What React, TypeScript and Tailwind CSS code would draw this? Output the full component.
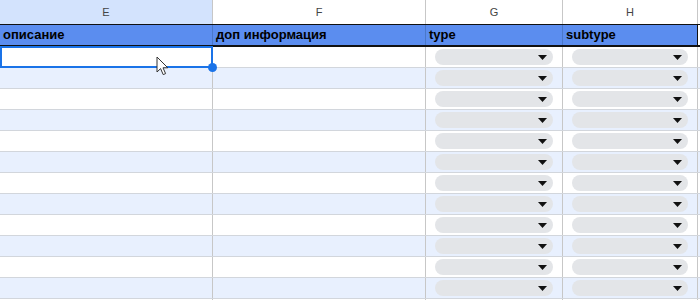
import React from 'react';

const font = { fontFamily: '"Liberation Sans", Arial, sans-serif' };

const ROWS = 13;

function Chip() {
  return (
    <div className="mx-[9px] flex h-4 flex-1 items-center justify-end rounded-full bg-[#e3e5e8] pr-[6px]">
      <svg width="9" height="5" viewBox="0 0 9 5">
        <path d="M0 0 L9 0 L4.5 5 Z" fill="#111" />
      </svg>
    </div>
  );
}

function Cursor() {
  return (
    <svg width="14" height="20" viewBox="0 0 14 20" className="absolute left-[156px] top-[9px]">
      <path
        d="M1 1 L1 16 L4.6 12.6 L7.2 18.6 L9.6 17.6 L7 11.8 L11.8 11.8 Z"
        fill="#fff"
        stroke="#333"
        strokeWidth="1"
        strokeLinejoin="round"
      />
    </svg>
  );
}

export default function App() {
  return (
    <div className="h-[300px] w-[700px] overflow-hidden bg-white" style={font}>
      {/* Column letters */}
      <div className="flex h-[24px] text-[11px] text-[#444]">
        <div className="flex w-[213px] items-center justify-center border-r border-[#c7c7c7] bg-[#d3e3fd]">E</div>
        <div className="flex w-[213px] items-center justify-center border-r border-[#c7c7c7]">F</div>
        <div className="flex w-[137px] items-center justify-center border-r border-[#c7c7c7]">G</div>
        <div className="flex w-[135px] items-center justify-center border-r border-[#c7c7c7]">H</div>
        <div className="flex-1" />
      </div>

      {/* Header row */}
      <div className="flex h-[23px] border-t border-b-2 border-[#111] bg-[#5b8def] text-[13px] font-bold text-black">
        <div className="flex w-[213px] items-center border-r border-[#4a78c9] pl-[3px]">описание</div>
        <div className="flex w-[213px] items-center border-r border-[#4a78c9] pl-[3px]">доп информация</div>
        <div className="flex w-[137px] items-center border-r border-[#4a78c9] pl-[3px]">type</div>
        <div className="flex w-[134px] items-center pl-[3px]">subtype</div>
        <div className="w-[1px] bg-[#111]" />
        <div className="flex-1 bg-white" />
      </div>

      {/* Data rows */}
      {Array.from({ length: ROWS }).map((_, i) => (
        <div
          key={i}
          className={`flex h-[21px] border-b border-[#d2d6dc] ${i % 2 === 1 ? 'bg-[#e8f0fe]' : 'bg-white'}`}
        >
          <div className="relative w-[213px] border-r border-[#c7c7c7]">
            {i === 0 && (
              <>
                <div className="absolute -top-[1px] -bottom-[1px] left-0 -right-[1px] border-2 border-[#1a73e8]" />
                <div className="absolute -bottom-[5px] -right-[5px] z-10 h-[9px] w-[9px] rounded-full bg-[#1a73e8]" />
                <Cursor />
              </>
            )}
          </div>
          <div className="w-[213px] border-r border-[#c7c7c7]" />
          <div className="flex w-[137px] items-center border-r border-[#c7c7c7]">
            <Chip />
          </div>
          <div className="flex w-[135px] items-center border-r border-[#c7c7c7]">
            <Chip />
          </div>
          <div className="flex-1" />
        </div>
      ))}
    </div>
  );
}
